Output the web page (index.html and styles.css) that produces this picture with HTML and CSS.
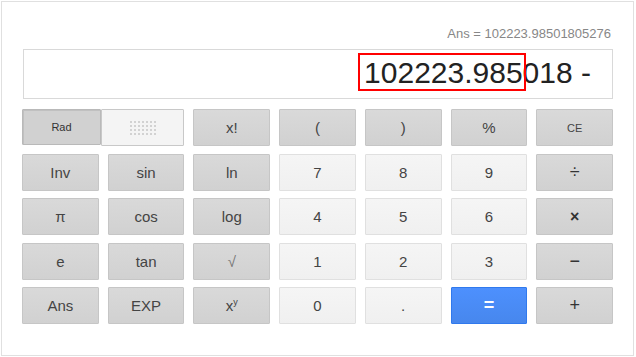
FILE: index.html
```html
<!DOCTYPE html>
<html>
<head>
  <title>Calculator</title>
  <link rel="stylesheet" href="styles.css">
</head>
<body>
  <div class="calc">
    <div class="ans-line">Ans = 102223.98501805276</div>
    <div class="display"><span class="mark">102223.985</span>018 -</div>

    <div class="keys">
      <div class="toggle">
        <button class="key rad">Rad</button>
        <button class="key deg">
          <svg width="26" height="14" viewBox="0 0 26 14">
            <defs>
              <pattern id="dots" width="4" height="4" patternUnits="userSpaceOnUse">
                <rect width="2" height="2" fill="#d2d2d2"/>
              </pattern>
            </defs>
            <rect width="26" height="14" fill="url(#dots)"/>
          </svg>
        </button>
      </div>
      <button class="key fn">x!</button>
      <button class="key fn">(</button>
      <button class="key fn">)</button>
      <button class="key fn">%</button>
      <button class="key fn small">CE</button>

      <button class="key fn">Inv</button>
      <button class="key fn">sin</button>
      <button class="key fn">ln</button>
      <button class="key num">7</button>
      <button class="key num">8</button>
      <button class="key num">9</button>
      <button class="key fn op">&divide;</button>

      <button class="key fn">&pi;</button>
      <button class="key fn">cos</button>
      <button class="key fn">log</button>
      <button class="key num">4</button>
      <button class="key num">5</button>
      <button class="key num">6</button>
      <button class="key fn bold">&times;</button>

      <button class="key fn">e</button>
      <button class="key fn">tan</button>
      <button class="key fn light">&radic;</button>
      <button class="key num">1</button>
      <button class="key num">2</button>
      <button class="key num">3</button>
      <button class="key fn op">&minus;</button>

      <button class="key fn">Ans</button>
      <button class="key fn">EXP</button>
      <button class="key fn">x<sup>y</sup></button>
      <button class="key num">0</button>
      <button class="key num">.</button>
      <button class="key equals">=</button>
      <button class="key fn op">+</button>
    </div>
  </div>
</body>
</html>
```

FILE: styles.css
```css
body {
  margin: 0;
  padding: 0;
  background-color: white;
  font-family: "Liberation Sans", Arial, sans-serif;
}

.calc {
  box-sizing: border-box;
  width: 633px;
  height: 355px;
  margin: 1px 0 0 1px;
  padding: 25px 20px 0 20px;
  border: 1px solid #e0e0e0;
  background-color: white;
}

.ans-line {
  height: 14px;
  line-height: 14px;
  margin-bottom: 8px;
  padding-right: 2px;
  text-align: right;
  font-size: 13px;
  color: #878787;
}

.display {
  box-sizing: border-box;
  height: 50px;
  margin-left: 1px;
  padding-right: 21px;
  border: 1px solid #d9d9d9;
  text-align: right;
  font-size: 30px;
  line-height: 45px;
  color: #222;
  white-space: nowrap;
}

.mark {
  position: relative;
}

.mark::after {
  content: "";
  position: absolute;
  top: -3px;
  bottom: -2px;
  left: -6px;
  right: -3px;
  border: 2px solid #f00;
}

.keys {
  display: grid;
  grid-template-columns: repeat(7, 1fr);
  grid-auto-rows: 37px;
  column-gap: 9px;
  row-gap: 7.5px;
  margin-top: 10px;
}

.toggle {
  grid-column: span 2;
  display: flex;
}

.key {
  box-sizing: border-box;
  margin: 0;
  padding: 0;
  font-family: "Liberation Sans", Arial, sans-serif;
  font-size: 15px;
  color: #444;
  border-radius: 1px;
  cursor: pointer;
}

.fn {
  background-color: #d6d6d6;
  background-image: linear-gradient(#d9d9d9, #d1d1d1);
  border: 1px solid #c6c6c6;
}

.num {
  background-color: #f2f2f2;
  background-image: linear-gradient(#f5f5f5, #f0f0f0);
  border: 1px solid #e0e0e0;
}

.small {
  font-size: 11px;
}

.op {
  font-size: 18px;
  color: #333;
}

.bold {
  font-weight: bold;
  font-size: 16px;
  color: #333;
}

.light {
  color: #777;
}

.rad {
  width: 79px;
  height: 36px;
  font-size: 11px;
  color: #333;
  background-color: #d1d1d1;
  border: 1px solid #b9b9b9;
  box-shadow: inset 1px 1px 0 #c0c0c0;
}

.deg {
  flex: 1;
  height: 37px;
  display: flex;
  align-items: center;
  justify-content: center;
  background-color: #f4f4f4;
  border: 1px solid #c8c8c8;
}

.equals {
  background-color: #4d90fe;
  background-image: linear-gradient(#4d90fe, #4787ed);
  border: 1px solid #3079ed;
  color: white;
  font-weight: bold;
  font-size: 18px;
}

sup {
  font-size: 9px;
  line-height: 0;
}
```
